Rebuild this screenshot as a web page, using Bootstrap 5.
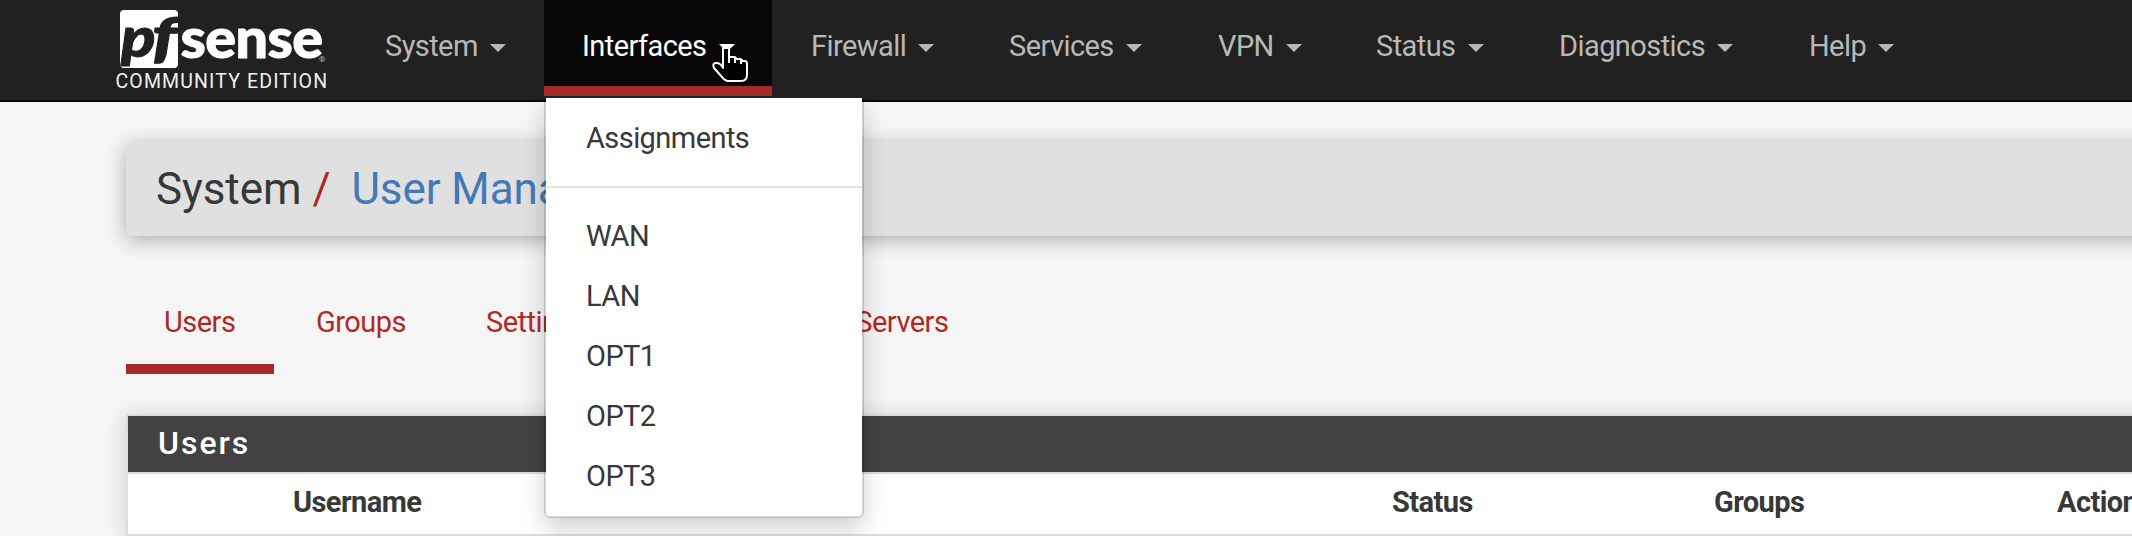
<!DOCTYPE html>
<html lang="en">
<head>
<meta charset="utf-8">
<title>System / User Manager</title>
<link href="https://cdn.jsdelivr.net/npm/bootstrap@5.3.0/dist/css/bootstrap.min.css" rel="stylesheet">
<style>
  :root { --brand-red: #a52b26; }
  body { background: #f5f5f5; color: #383838; font-family: Roboto, "Liberation Sans", sans-serif; font-size: 29px; letter-spacing: -.57px; line-height: 40px; overflow: hidden; height: 536px; }
  .topbar { height: 102px; background: #212121; border-bottom: 2px solid #080808; padding: 0 0 0 114px; align-items: flex-start; flex-wrap: nowrap; position: relative; z-index: 10; }
  .brand-logo { width: 232px; height: 100px; flex: none; }
  .main-menu .nav-item { position: relative; width: var(--w); flex: none; }
  .main-menu .nav-link { height: 96px; padding: 26px 0 0 39px; color: #b8b8b8; display: flex; line-height: 40px; border-bottom: 10px solid transparent; border-radius: 0; }
  .main-menu .nav-link.active { padding-left: 38px; background: #080808; color: #fff; border-bottom-color: var(--brand-red); }
  .main-menu .dropdown-toggle::after { border-top: 8px solid; border-left: 8px solid transparent; border-right: 8px solid transparent; margin: 18px 0 0 12px; }
  .menu-panel { top: 98px; left: 0; width: 320px; height: 420px; margin: 0; padding: 10px 0; border: 2px solid rgba(0,0,0,.15); border-top: 0; border-radius: 0 0 6px 6px; background: #fff; background-clip: padding-box; box-shadow: 0 12px 24px rgba(0,0,0,.175); font-size: 29px; }
  .menu-panel .dropdown-item { padding: 10px 40px; height: 60px; color: #383838; line-height: 40px; }
  .menu-panel .dropdown-divider { margin: 18px 0 18px; border-top: 2px solid #e5e5e5; opacity: 1; }
  .hand { position: absolute; left: 168px; top: 46px; z-index: 1001; }
  .page { margin-left: 126px; width: 2080px; }
  .crumbs { margin-top: 40px; height: 94px; padding: 0 0 0 30px; background: #e0e0e0; border-radius: 4px; box-shadow: 0 4px 20px rgba(0,0,0,.3); font-size: 44px; letter-spacing: -.1px; }
  .crumbs .slash { color: #b02a25; margin: 0 21px 0 11px; }
  .crumbs a { color: #4479b8; text-decoration: none; }
  .user-tabs { margin-top: 60px; gap: 4px; border: 0; flex-wrap: nowrap; }
  .user-tabs .nav-link { margin: 0; padding: 6px 38px 0; height: 78px; color: #b02a25; border: 0; border-bottom: 10px solid transparent; border-radius: 0; line-height: 40px; background: none; letter-spacing: -.52px; }
  .user-tabs .nav-link.active { width: 148px; padding-right: 0; color: #b02a25; background: none; border-bottom: 10px solid var(--brand-red); }
  .users-card { margin-top: 40px; border: 2px solid #ddd; border-radius: 0; box-shadow: 0 2px 20px rgba(0,0,0,.16); background: #fff; height: 122px; }
  .users-card .card-header { flex: none; height: 58px; padding: 7px 30px 0; background: #424242; color: #fff; border-bottom: 2px solid #ddd; border-radius: 0; font-size: 32px; font-weight: 500; line-height: 40px; letter-spacing: 2px; }
  .users-table { table-layout: fixed; margin: 0; color: #383838; }
  .users-table th { height: 60px; padding: 8px 10px 0 11px; border: 0; vertical-align: top; font-weight: 700; line-height: 40px; }
</style>
</head>
<body>
<nav class="navbar topbar justify-content-start">
  <a class="brand-logo" href="#" aria-label="pfSense Community Edition">
    <svg width="232" height="100" viewBox="114 0 232 100">
      <rect x="120" y="10" width="58" height="58" rx="4" fill="#fff"/>
      <g font-family="Lato, sans-serif" font-weight="900">
        <text x="121" y="57" font-size="56" font-style="italic" fill="#212121" stroke="#212121" textLength="34" lengthAdjust="spacingAndGlyphs">p</text>
        <text x="152" y="57" font-size="56" font-style="italic" fill="#212121" stroke="#212121" textLength="24" lengthAdjust="spacingAndGlyphs">f</text>
        <text x="180.500" y="58" font-size="56" fill="#fff" stroke="#fff" textLength="142" lengthAdjust="spacingAndGlyphs">sense</text>
      </g>
      <text x="319" y="62" font-size="8" fill="#bbb">®</text>
      <text x="115.500" y="88" font-size="19.500" fill="#f0f0f0" textLength="211">COMMUNITY EDITION</text>
    </svg>
  </a>
  <ul class="nav main-menu flex-nowrap">
    <li class="nav-item" style="--w:198px"><a class="nav-link dropdown-toggle" href="#">System</a></li>
    <li class="nav-item" style="--w:228px">
      <a class="nav-link dropdown-toggle active" href="#">Interfaces</a>
      <ul class="dropdown-menu menu-panel show">
        <li><a class="dropdown-item" href="#">Assignments</a></li>
        <li><hr class="dropdown-divider"></li>
        <li><a class="dropdown-item" href="#">WAN</a></li>
        <li><a class="dropdown-item" href="#">LAN</a></li>
        <li><a class="dropdown-item" href="#">OPT1</a></li>
        <li><a class="dropdown-item" href="#">OPT2</a></li>
        <li><a class="dropdown-item" href="#">OPT3</a></li>
      </ul>
      <svg class="hand" width="36" height="36" viewBox="0 0 36 36" fill="#000" stroke="#fff" stroke-width="2" stroke-linejoin="round">
        <path d="M11 22V2h6v9h5q2 0 2 2h4q2 0 2 2h3q2 0 2 3v11q0 6-6 6H16q-3 0-6-4L2 22q-2-5 2-5 5 0 7 5Z"/>
        <path d="M17 11v6M23 12v5M29 14v4" fill="none"/>
      </svg>
    </li>
    <li class="nav-item" style="--w:198px"><a class="nav-link dropdown-toggle" href="#">Firewall</a></li>
    <li class="nav-item" style="--w:209px"><a class="nav-link dropdown-toggle" href="#">Services</a></li>
    <li class="nav-item" style="--w:158px"><a class="nav-link dropdown-toggle" href="#">VPN</a></li>
    <li class="nav-item" style="--w:183px"><a class="nav-link dropdown-toggle" href="#">Status</a></li>
    <li class="nav-item" style="--w:250px"><a class="nav-link dropdown-toggle" href="#">Diagnostics</a></li>
    <li class="nav-item" style="--w:160px"><a class="nav-link dropdown-toggle" href="#">Help</a></li>
  </ul>
</nav>
<main class="page">
  <header class="crumbs d-flex align-items-center"><span>System</span><span class="slash">/</span><a href="#">User Manager</a></header>
  <ul class="nav nav-tabs user-tabs">
    <li class="nav-item"><a class="nav-link active" href="#">Users</a></li>
    <li class="nav-item"><a class="nav-link" href="#">Groups</a></li>
    <li class="nav-item"><a class="nav-link" href="#">Settings</a></li>
    <li class="nav-item"><a class="nav-link" href="#">Authentication Servers</a></li>
  </ul>
  <section class="card users-card">
    <div class="card-header">Users</div>
    <table class="table users-table">
      <colgroup><col style="width:154px"><col style="width:316px"><col style="width:783px"><col style="width:322px"><col style="width:343px"><col></colgroup>
      <thead><tr><th></th><th>Username</th><th></th><th>Status</th><th>Groups</th><th>Actions</th></tr></thead>
    </table>
  </section>
</main>
<script src="https://cdn.jsdelivr.net/npm/bootstrap@5.3.0/dist/js/bootstrap.bundle.min.js"></script>
</body>
</html>
